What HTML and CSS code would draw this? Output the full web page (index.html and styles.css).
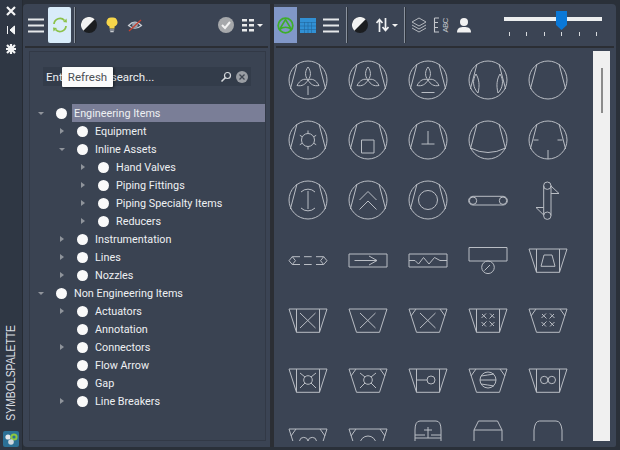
FILE: index.html
```html
<!DOCTYPE html>
<html lang="de">
<head>
<meta charset="utf-8">
<title>Symbolspalette</title>
<link rel="stylesheet" href="styles.css">
</head>
<body>
<svg class="defs" width="0" height="0" aria-hidden="true">
  <defs>
    <g id="c"><circle r="19"/><path d="M-11-16-17.6 9M11-16 17.6 9"/></g>
    <path id="blades" d="M0 0C-3.500-4-3-9 0-13 3-9 3.500-4 0 0ZM0 0C-4-2-8 0-11 5.500-6 6.500-2.500 4.500 0 0ZM0 0C4-2 8 0 11 5.500 6 6.500 2.500 4.500 0 0Z"/>
    <path id="t" d="M-19-11H19L11.5 12.3H-11.5Z"/>
    <g id="tv"><use href="#t"/><path d="M-11.5-11V12.3M11.5-11V12.3"/></g>
    <g id="tc"><use href="#t"/><path d="M-17-4-12-11M17-4 12-11"/></g>
    <path id="x" d="M-8 8 7.5-7M-8-7 7.5 8"/>
    <g id="cx"><circle r="4.3"/><path d="M-8 8-3 3M8 8 3 3M-8-7-3-3M8-7 3-3"/></g>
    <path id="d4" d="M-6-6-1.500-1.500M6-6 1.500-1.500M-6 6-1.500 1.500M6 6 1.500 1.500M-2-6.500-6.500-2M2-6.500 6.500-2M-2 6.500-6.500 2M2 6.500 6.500 2"/>
  </defs>
</svg>

<aside class="strip">
  <svg class="strip-icon" viewBox="0 0 12 12"><path class="bold" d="M2 2 10 10M10 2 2 10"/></svg>
  <svg class="strip-icon" viewBox="0 0 12 12"><path class="pin" d="M2.500 2V10M9.500 2 5 6 9.500 10Z"/></svg>
  <svg class="strip-icon" viewBox="0 0 12 12"><path class="bold" d="M2 2 10 10M10 2 2 10M6 1V11M1 6H11"/><rect class="gear" x="3.500" y="3.500" width="5" height="5"/></svg>
  <span class="strip-title">SYMBOLSPALETTE</span>
  <svg class="strip-logo" viewBox="0 0 16 16"><rect width="16" height="16" rx="2" fill="#2b7096"/><circle cx="5" cy="6" r="2.600" fill="#e4e8ec"/><circle cx="11" cy="6" r="2.600" fill="none" stroke="#8cc63f" stroke-width="2"/><circle cx="8" cy="11" r="2.800" fill="#cfd8e0"/></svg>
</aside>

<main class="main">
  <section class="left">
    <div class="toolbar tb-left">
      <svg class="ic16 m5" viewBox="0 0 16 16"><path class="menu" d="M0 2.500H16M0 8.500H16M0 14.500H16"/></svg>
      <div class="refresh m4">
        <svg width="16" height="16" viewBox="0 0 16 16"><path class="refresh-arc" d="M2 7A6 6 0 0 1 12.500 3.500M14 9A6 6 0 0 1 3.500 12.500"/><path class="refresh-head" d="M11 5 15 5.500 14.500 1.500ZM5 11 1 10.500 1.500 14.500Z"/></svg>
      </div>
      <span class="sep m3"></span>
      <svg class="ic16 m5" viewBox="0 0 16 16"><circle cx="8" cy="8" r="8" fill="#1b1d20"/><path d="M2.300 13.700A8 8 0 0 1 13.700 2.300Z" fill="#f2f2f2"/></svg>
      <svg class="ic16 m7" viewBox="0 0 16 16"><path d="M8 .5A4.700 4.700 0 0 0 5.500 9.500V11.500H10.500V9.500A4.700 4.700 0 0 0 8 .5Z" fill="#f7d64a"/><path d="M5.700 13H10.300M6.300 14.700H9.700" stroke="#c9ccd0" stroke-width="1.200"/></svg>
      <svg class="ic16 m7" viewBox="0 0 16 16"><path d="M1.500 8.500Q8 2 14.500 8.500 8 14 1.500 8.500Z" fill="none" stroke="#c6cbd2" stroke-width="1.200"/><circle cx="8" cy="8" r="2.800" fill="#9aa2ad"/><path d="M2 14 14 3" stroke="#c8402f" stroke-width="1.300"/></svg>
      <span class="grow"></span>
      <svg class="ic16" viewBox="0 0 16 16"><circle cx="8" cy="8" r="8" fill="#a6a8ab"/><path d="M4 8 7 11 12 5" fill="none" stroke="#f2f2f2" stroke-width="2"/></svg>
      <svg class="dots m8" width="12" height="14" viewBox="0 0 12 14"><path d="M0 1H5V3.500H0ZM7 1H12V3.500H7ZM0 6H5V8.500H0ZM7 6H12V8.500H7ZM0 11H5V13.500H0ZM7 11H12V13.500H7Z" fill="#e8e9ea"/></svg>
      <span class="caret"></span>
    </div>
    <div class="rule"></div>
    <div class="tree-box">
      <div class="search">
        <span class="search-text">Enter text to search...</span>
        <svg class="search-ic" width="12" height="12" viewBox="0 0 12 12"><circle cx="7.500" cy="4.500" r="3" fill="none" stroke="#d6d9dd" stroke-width="1.200"/><path d="M5.500 6.500 1.500 10.500" stroke="#d6d9dd" stroke-width="1.600"/></svg>
        <svg class="clear-ic" width="12" height="12" viewBox="0 0 12 12"><circle cx="6" cy="6" r="6" fill="#999da3"/><path d="M3.500 3.500 8.500 8.500M8.500 3.500 3.500 8.500" stroke="#3f4651" stroke-width="1.300"/></svg>
      </div>
      <ul class="tree">
        <li class="row l0"><i class="arr down"></i><b class="dot"></b><span class="label sel">Engineering Items</span></li>
        <li class="row l1"><i class="arr right"></i><b class="dot"></b><span class="label">Equipment</span></li>
        <li class="row l1"><i class="arr down"></i><b class="dot"></b><span class="label">Inline Assets</span></li>
        <li class="row l2"><i class="arr right"></i><b class="dot"></b><span class="label">Hand Valves</span></li>
        <li class="row l2"><i class="arr right"></i><b class="dot"></b><span class="label">Piping Fittings</span></li>
        <li class="row l2"><i class="arr right"></i><b class="dot"></b><span class="label">Piping Specialty Items</span></li>
        <li class="row l2"><i class="arr right"></i><b class="dot"></b><span class="label">Reducers</span></li>
        <li class="row l1"><i class="arr right"></i><b class="dot"></b><span class="label">Instrumentation</span></li>
        <li class="row l1"><i class="arr right"></i><b class="dot"></b><span class="label">Lines</span></li>
        <li class="row l1"><i class="arr right"></i><b class="dot"></b><span class="label">Nozzles</span></li>
        <li class="row l0"><i class="arr down"></i><b class="dot"></b><span class="label">Non Engineering Items</span></li>
        <li class="row l1"><i class="arr right"></i><b class="dot"></b><span class="label">Actuators</span></li>
        <li class="row l1"><i class="arr"></i><b class="dot"></b><span class="label">Annotation</span></li>
        <li class="row l1"><i class="arr right"></i><b class="dot"></b><span class="label">Connectors</span></li>
        <li class="row l1"><i class="arr"></i><b class="dot"></b><span class="label">Flow Arrow</span></li>
        <li class="row l1"><i class="arr"></i><b class="dot"></b><span class="label">Gap</span></li>
        <li class="row l1"><i class="arr right"></i><b class="dot"></b><span class="label">Line Breakers</span></li>
      </ul>
      <div class="tooltip">Refresh</div>
    </div>
  </section>

  <div class="splitter"></div>

  <section class="right">
    <div class="toolbar">
      <div class="active">
        <svg width="17" height="17" viewBox="0 0 17 17"><circle cx="8.500" cy="8.500" r="7.300" fill="none" stroke="#3fae2a" stroke-width="1.800"/><path d="M2.500 12.500 8.500 2.500 14.500 12.500Q8.500 8 2.500 12.500Z" fill="none" stroke="#3fae2a" stroke-width="1.600"/></svg>
      </div>
      <svg class="ic16 m3" viewBox="0 0 16 16"><rect y="1" width="16" height="15" fill="#3190d4"/><path d="M0 5.500H16M0 9H16M0 12.500H16M4.500 5V16M8 5V16M11.500 5V16" stroke="#22679c" stroke-width=".6"/></svg>
      <svg class="ic16 m7" viewBox="0 0 16 16"><path class="menu" d="M0 2.500H16M0 8.500H16M0 14.500H16"/></svg>
      <span class="sep m7"></span>
      <svg class="ic16 m4" viewBox="0 0 16 16"><circle cx="8" cy="8" r="8" fill="#1b1d20"/><path d="M2.300 13.700A8 8 0 0 1 13.700 2.300Z" fill="#f2f2f2"/></svg>
      <svg class="arrows m8" width="13" height="14" viewBox="0 0 13 14"><path d="M3.500 14V2M.5 5 3.500 1.500 6.500 5M9.500 0V12M6.500 9 9.500 12.500 12.500 9" fill="none" stroke="#f1f2f3" stroke-width="1.700"/></svg>
      <span class="caret"></span>
      <span class="sep m6"></span>
      <svg class="ic16 m5" viewBox="0 0 16 16"><path d="M8 1 15 5 8 9 1 5ZM1 8 8 12 15 8M1 11 8 15 15 11" fill="none" stroke="#b4b8be"/></svg>
      <svg class="abc m7" width="14" height="16" viewBox="0 0 14 16"><path d="M.5 1V15H5M.5 1H5M.5 5.500H4M.5 10.500H4" fill="none" stroke="#c3c6cb" stroke-width="1.100"/><text class="abc-text" transform="translate(14 15.500) rotate(-90)">ABC</text></svg>
      <svg class="ic16 m8" viewBox="0 0 16 16"><circle cx="8" cy="5" r="4" fill="#f2f2f2"/><path d="M1 15.500C1 11 4 10 8 10S15 11 15 15.500Z" fill="#f2f2f2"/></svg>
      <div class="slider">
        <div class="track"></div>
        <div class="ticks"><i></i><i></i><i></i><i></i><i></i><i></i></div>
        <svg class="thumb" width="11" height="19" viewBox="0 0 11 19"><path d="M0 0H11V14L5.500 19 0 14Z" fill="#0a78d8"/></svg>
      </div>
    </div>
    <div class="rule"></div>
    <div class="pane">
      <div class="grid">
        <svg class="sym" viewBox="-20 -20 40 40"><use href="#c"/><use href="#blades"/><path d="M0 6V15"/></svg>
        <svg class="sym" viewBox="-20 -20 40 40"><use href="#c"/><use href="#blades"/></svg>
        <svg class="sym" viewBox="-20 -20 40 40"><use href="#c"/><use href="#blades"/><path d="M-6.500 12.500H6.500"/></svg>
        <svg class="sym" viewBox="-20 -20 40 40"><use href="#c"/><path d="M-12-6C-16 0-15 8-10 13-8 5-9-1-12-6M12-6C16 0 15 8 10 13 8 5 9-1 12-6"/></svg>
        <svg class="sym" viewBox="-20 -20 40 40"><use href="#c"/></svg>

        <svg class="sym" viewBox="-20 -20 40 40"><use href="#c"/><circle r="6.500"/><path d="M0-6.500V-9.500M0 6.500V9.500M-5.600-3.200-8.200-4.700M5.600-3.200 8.200-4.700M-5.600 3.200-8.200 4.700M5.600 3.200 8.200 4.700"/></svg>
        <svg class="sym" viewBox="-20 -20 40 40"><use href="#c"/><path d="M-6.500 0H6V13H-6.500Z"/></svg>
        <svg class="sym" viewBox="-20 -20 40 40"><use href="#c"/><path d="M0-9V4M-6.500 4H6.500"/></svg>
        <svg class="sym" viewBox="-20 -20 40 40"><use href="#c"/><path d="M-17.600 8Q0 17 17.600 8"/></svg>
        <svg class="sym" viewBox="-20 -20 40 40"><use href="#c"/><path d="M-14.500 0H-9.500M9.500 0H14.500M0 10V19"/></svg>

        <svg class="sym" viewBox="-20 -20 40 40"><use href="#c"/><path d="M0-9V9M-7-8A10 10 0 0 1 7-8M-7 8A10 10 0 0 0 7 8"/></svg>
        <svg class="sym" viewBox="-20 -20 40 40"><use href="#c"/><path d="M-8.500 0 0-8.500 8.500 0M-8.500 9.500 0 1 8.500 9.500"/></svg>
        <svg class="sym" viewBox="-20 -20 40 40"><use href="#c"/><circle r="9.500"/></svg>
        <svg class="sym" viewBox="-20 -20 40 40"><path d="M-15-3.700H15A4.300 4.300 0 0 1 15 5H-15A4.300 4.300 0 0 1-15-3.700Z"/><circle cx="-15" cy=".7" r="3.700"/><circle cx="15" cy=".7" r="3.700"/></svg>
        <svg class="sym" viewBox="-20 -20 40 40"><path d="M-4.300-14.500V15.500M3-14.500V15.500M3-14 11-6.500H3M-4.300 15-12 7.500H-4.300"/><circle cx="-.7" cy="-14.300" r="3.700"/><circle cx="-.7" cy="15.700" r="3.700"/></svg>

        <svg class="sym" viewBox="-20 -20 40 40"><path d="M-8-3.300H-15.700L-19 .7-15.700 4.500H-8M-4-3.300H3.700M-4 4.500H3.700M8-3.300H15.700L19 .7 15.700 4.500H8M-15.700-3.300-12.500.7-15.700 4.500M15.700-3.300 12.500.7 15.700 4.500"/></svg>
        <svg class="sym" viewBox="-20 -20 40 40"><path d="M-19-6H19V7H-19ZM-13.500.5H9M1-4 9 .5 1 5"/></svg>
        <svg class="sym" viewBox="-20 -20 40 40"><path d="M-19-6H19V7H-19ZM-19 .5H-13L-9.500 4-4.500-2.500 1 4 6.500-2.500 12 .500H19"/></svg>
        <svg class="sym" viewBox="-20 -20 40 40"><path d="M-19-12.500H19V1H-19Z"/><circle cy="7.300" r="6.300"/><path d="M-3.500 10.500 2 5"/></svg>
        <svg class="sym" viewBox="-20 -20 40 40"><use href="#tv"/><path d="M-4-5H4L7 6.300H-7Z"/></svg>

        <svg class="sym" viewBox="-20 -20 40 40"><use href="#tv"/><use href="#x"/></svg>
        <svg class="sym" viewBox="-20 -20 40 40"><use href="#t"/><use href="#x"/></svg>
        <svg class="sym" viewBox="-20 -20 40 40"><use href="#tc"/><use href="#x"/></svg>
        <svg class="sym" viewBox="-20 -20 40 40"><use href="#tv"/><use href="#d4"/></svg>
        <svg class="sym" viewBox="-20 -20 40 40"><use href="#tc"/><use href="#d4"/></svg>

        <svg class="sym" viewBox="-20 -20 40 40"><use href="#tv"/><use href="#cx"/></svg>
        <svg class="sym" viewBox="-20 -20 40 40"><use href="#tc"/><use href="#cx"/></svg>
        <svg class="sym" viewBox="-20 -20 40 40"><use href="#tv"/><path d="M-11.500 0H-1"/><circle cx="3" r="4"/></svg>
        <svg class="sym" viewBox="-20 -20 40 40"><use href="#tc"/><circle r="8"/><path d="M-8 0H8M-7-4Q0-5 6-6M-7 4Q0 5 6 6"/></svg>
        <svg class="sym" viewBox="-20 -20 40 40"><use href="#tv"/><circle cx="-3.800" r="3.700"/><circle cx="3.800" r="3.700"/></svg>

        <svg class="sym" viewBox="-20 -20 40 40"><use href="#tc"/><path d="M-8.500 1A4.300 4.300 0 0 1 0 1 4.300 4.300 0 0 1 8.500 1"/></svg>
        <svg class="sym" viewBox="-20 -20 40 40"><use href="#tc"/><circle cy="4" r="8"/><path d="M0 1V2"/></svg>
        <svg class="sym" viewBox="-20 -20 40 40"><path d="M-13 1V-10Q-13-19-8-19H8Q13-19 13-10V1M-13-5H-3M3-5H13M-13-2H13M0-13V-2M-4-10H4"/></svg>
        <svg class="sym" viewBox="-20 -20 40 40"><path d="M-14-10-9.500-19H9.500L14-10V1M-14-10V1M-14-10H14"/></svg>
        <svg class="sym" viewBox="-20 -20 40 40"><path d="M-14 1V-10Q-13-19-8.500-19H8Q13-19 14-10V1"/></svg>
      </div>
      <div class="scroll"><span class="scroll-thumb"></span></div>
    </div>
  </section>
</main>
</body>
</html>
```
FILE: styles.css
```css
* { box-sizing: border-box; }
html, body { margin: 0; padding: 0; }
body {
  width: 620px;
  height: 450px;
  overflow: hidden;
  display: flex;
  background: #2a3039;
  font-family: Roboto, "Noto Sans", sans-serif;
  font-size: 11px;
  color: #eef0f2;
}
.defs { position: absolute; }

.strip {
  width: 23px;
  padding: 5px 0 3px;
  display: flex;
  flex-direction: column;
  align-items: center;
  background: #2f3744;
  border-right: 1px solid #262b33;
}
.strip-icon { width: 12px; height: 12px; margin: 0 0 7px; flex: none; }
.bold { fill: none; stroke: #f4f5f6; stroke-width: 2.2; }
.pin { fill: #f4f5f6; stroke: #f4f5f6; stroke-width: 1; }
.gear { fill: #f4f5f6; }
.strip-title {
  margin-top: auto;
  writing-mode: vertical-rl;
  transform: translateY(12px) rotate(180deg) scaleY(.8);
  font-family: "Liberation Sans", sans-serif;
  font-size: 13px;
  line-height: 14px;
  color: #d9dce0;
}
.strip-logo { width: 16px; height: 16px; margin-top: 10px; flex: none; }

.main {
  flex: 1;
  display: flex;
  margin: 4px 4px 3px 0;
  background: #3b4454;
  border-radius: 4px 4px 2px 4px;
}
.left { width: 247px; flex: none; display: flex; flex-direction: column; position: relative; }
.splitter { width: 4px; flex: none; background: #2b2e34; }
.right { flex: 1; display: flex; flex-direction: column; min-width: 0; }

.toolbar { height: 42px; flex: none; display: flex; align-items: center; }
.tb-left { padding-right: 7px; }
.rule { height: 2px; flex: none; margin: 0 2px; background: #2b2e34; }
.grow { flex: 1; }
.ic16 { width: 16px; height: 16px; flex: none; }
.menu { fill: none; stroke: #e6e8ea; stroke-width: 2; }
.m3 { margin-left: 3px; } .m4 { margin-left: 4px; } .m5 { margin-left: 5px; }
.m6 { margin-left: 6px; } .m7 { margin-left: 7px; } .m8 { margin-left: 8px; }
.sep { width: 2px; height: 36px; background: #8a929e; border-right: 1px solid #2d333c; flex: none; }
.refresh {
  width: 23px; height: 36px; flex: none;
  display: flex; align-items: center; justify-content: center;
  background: #d9ecfa; border-radius: 2px;
}
.refresh-arc { fill: none; stroke: #8cc24a; stroke-width: 1.800; }
.refresh-head { fill: #8cc24a; }
.active {
  width: 23px; height: 36px; flex: none;
  display: flex; align-items: center; justify-content: center;
  background: #8197c8;
}
.dots, .arrows { flex: none; }
.abc { flex: none; overflow: visible; }
.caret {
  margin-left: 3px;
  width: 0; height: 0; flex: none;
  border: 3px solid transparent;
  border-top: 3px solid #f2f2f2;
  border-bottom: 0;
}
.abc-text { font-family: "Liberation Sans", sans-serif; font-size: 8px; letter-spacing: -.8px; fill: #c3c6cb; }

.slider { width: 98px; height: 28px; flex: none; margin-left: 32px; position: relative; }
.track { height: 4px; margin-top: 6px; background: #eceeef; }
.ticks { display: flex; justify-content: space-between; margin: 11px 5px 0; }
.ticks i { width: 1px; height: 4px; background: #d6d9dd; }
.thumb { position: absolute; left: 52px; top: 0; }

.tree-box {
  flex: 1;
  margin: 3px 4px 6px 6px;
  border: 1px solid #323946;
  background: #3a4352;
  min-height: 0;
}
.search {
  height: 19px;
  margin: 15px 14px 18px 13px;
  padding: 0 3px;
  display: flex;
  align-items: center;
  background: #333c4a;
}
.search-text { flex: 1; font-size: 11.5px; white-space: nowrap; }
.search-ic { margin-right: 4px; }

.tree { list-style: none; margin: 0; padding: 0; }
.row { height: 18px; display: flex; align-items: center; font-size: 10.8px; }
.l0 { padding-left: 5px; }
.l1 { padding-left: 26px; }
.l2 { padding-left: 47px; }
.arr { width: 11px; height: 11px; margin-right: 10px; flex: none; display: flex; align-items: center; justify-content: center; }
.arr.right::before { content: ""; border: 3.5px solid transparent; border-left: 4px solid #8f949b; border-right: 0; }
.arr.down::before { content: ""; border: 3.5px solid transparent; border-top: 3.5px solid #8f949b; border-bottom: 0; }
.dot { width: 11px; height: 11px; margin-right: 5px; flex: none; border-radius: 50%; background: #fafafa; }
.label { flex: 1; height: 18px; line-height: 20px; padding-left: 2px; white-space: nowrap; }
.label.sel { background: #7a7e97; }

.tooltip {
  position: absolute;
  left: 39px;
  top: 63px;
  width: 51px;
  height: 20px;
  line-height: 20px;
  text-align: center;
  background: #fbfbfb;
  color: #4b4f55;
  font-size: 11.5px;
  border-radius: 1px;
  box-shadow: 1px 1px 3px rgba(0, 0, 0, .55);
}

.pane { flex: 1; min-height: 0; display: flex; margin-bottom: 6px; padding-left: 4px; overflow: hidden; }
.grid { width: 315px; flex: none; display: grid; grid-template-columns: repeat(5, 60px); grid-auto-rows: 60px; padding-top: 2px; overflow: hidden; }
.sym { width: 60px; height: 60px; padding: 10px; fill: none; stroke: #b9bdc4; stroke-width: 1; overflow: visible; }
.scroll { width: 17px; flex: none; margin-top: 3px; padding-top: 17px; display: flex; justify-content: center; background: #f0f0f0; }
.scroll-thumb { width: 2px; height: 45px; background: #8b8b8b; }
```
